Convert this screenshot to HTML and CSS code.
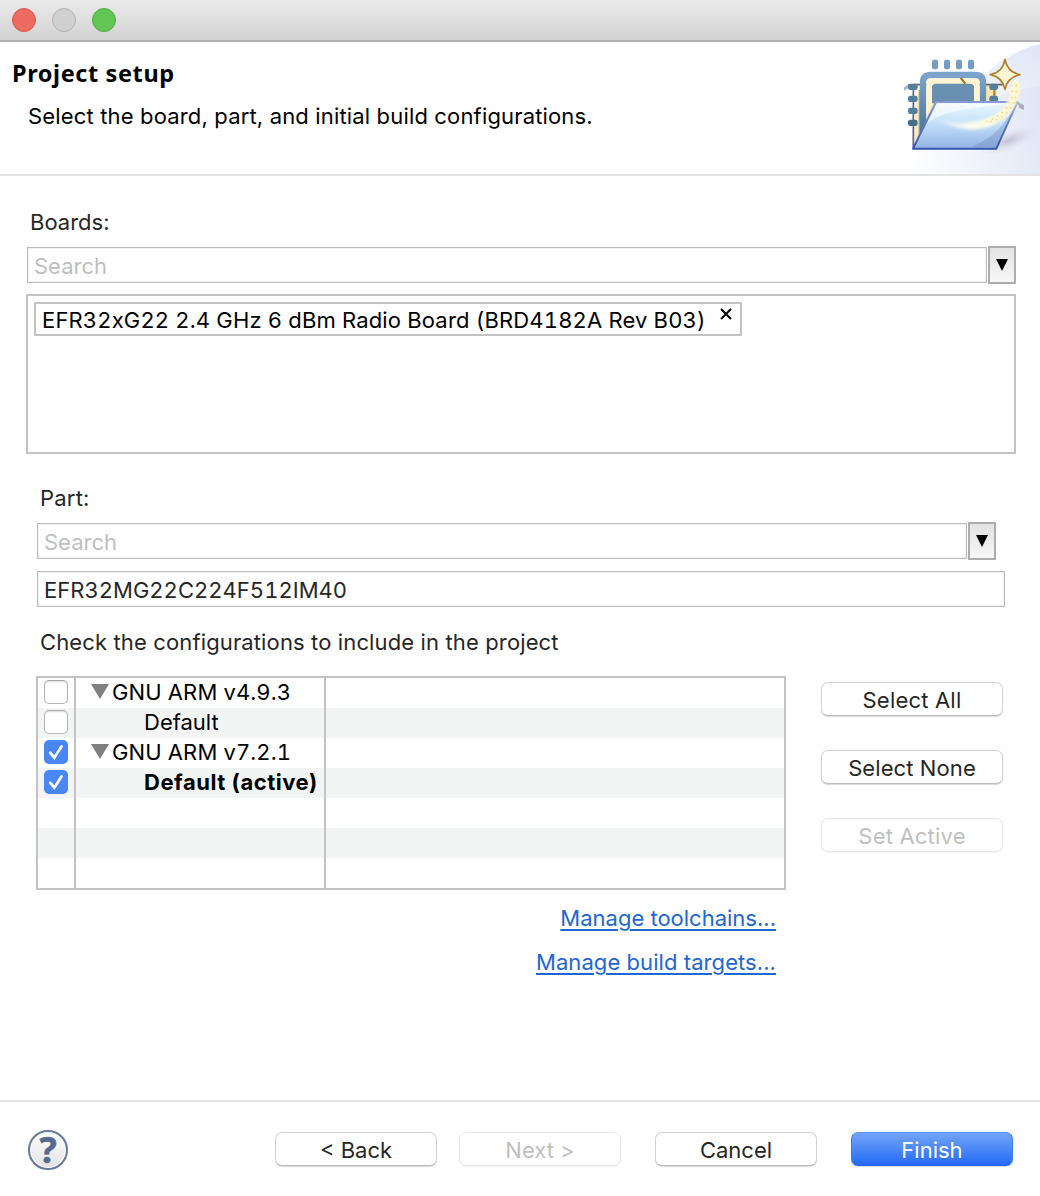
FILE: index.html
```html
<!DOCTYPE html>
<html lang="en">
<head>
<meta charset="utf-8">
<title>Project setup</title>
<link rel="stylesheet" href="styles.css">
</head>
<body>
<div class="window">
  <div class="titlebar">
    <span class="light light-close"></span>
    <span class="light light-min"></span>
    <span class="light light-zoom"></span>
  </div>

  <header class="banner">
    <div class="banner-text">
      <h1>Project setup</h1>
      <p><span class="t-sub">Select the board, part, and initial build configurations.</span></p>
    </div>
    <svg class="banner-art" width="150" height="132" viewBox="0 6 450 396" aria-hidden="true">
      <defs>
        <linearGradient id="swoosh" x1="0" y1="1" x2="1" y2="0"><stop offset="0" stop-color="#ffffff"/><stop offset=".5" stop-color="#f5f7fc"/><stop offset="1" stop-color="#dfe6f5"/></linearGradient>
        <linearGradient id="ground" x1="0" y1="0" x2="1" y2="0"><stop offset="0" stop-color="#fff"/><stop offset="1" stop-color="#dce3f4"/></linearGradient>
        <linearGradient id="steel" x1="0" y1="0" x2="0" y2="1"><stop offset="0" stop-color="#7ba3cb"/><stop offset="1" stop-color="#4a7595"/></linearGradient>
        <linearGradient id="folder" x1="0" y1="0" x2="0" y2="1"><stop offset="0" stop-color="#ecf8ff"/><stop offset=".45" stop-color="#c5e1f9"/><stop offset="1" stop-color="#93b3e8"/></linearGradient>
        <linearGradient id="edge" x1="0" y1="0" x2="0" y2="1"><stop offset="0" stop-color="#8a9ad2"/><stop offset="1" stop-color="#3353b4"/></linearGradient>
        <linearGradient id="cream" x1="0" y1="0" x2="1" y2="1"><stop offset="0" stop-color="#fffbe6"/><stop offset="1" stop-color="#eed28a"/></linearGradient>
        <linearGradient id="trail" x1="0" y1="0" x2="1" y2="0"><stop offset="0" stop-color="#fff" stop-opacity=".3"/><stop offset=".4" stop-color="#fdfdec"/><stop offset="1" stop-color="#fff6cf"/></linearGradient>
        <radialGradient id="shade"><stop offset="0" stop-color="#b9b0c6" stop-opacity=".75"/><stop offset="1" stop-color="#d9d6e6" stop-opacity="0"/></radialGradient>
        <filter id="glow" x="-20%" y="-20%" width="140%" height="140%"><feGaussianBlur stdDeviation="4"/></filter>
      </defs>
      <path d="M40 402C110 300 190 170 300 90C350 50 400 22 450 12V402Z" fill="url(#swoosh)"/>
      <path d="M40 402C160 360 170 170 450 138V402Z" fill="url(#ground)" opacity=".7"/>
      <ellipse cx="355" cy="302" rx="95" ry="30" fill="url(#shade)" transform="rotate(-20 355 302)"/>
      <path d="M42 152V142L56 132H74V140L60 142Z" fill="#999da3" opacity=".75"/>
      <path d="M380 184L402 196V210L388 204Z" fill="#a4a7ae" opacity=".85"/>
      <path d="M68 134H320V200H130L72 318H68Z" fill="url(#cream)"/>
      <path d="M68 134H340" stroke="#765e59" stroke-width="5"/>
      <path d="M70 138V322" stroke="#5363af" stroke-width="5"/>
      <path d="M88 150V290" stroke="#c5973b" stroke-width="4"/>
      <path d="M99 290V128Q99 105 122 105H256Q279 105 279 128V190" fill="none" stroke="url(#steel)" stroke-width="19"/>
      <path d="M109 225V130Q109 115 122 115H254Q269 115 269 130V190H126Z" fill="#fff5d2"/>
      <path d="M126 190V142Q126 131 137 131H240Q252 131 252 142V190Z" fill="#6990b0"/>
      <path d="M212 114L226 131" stroke="#9b7430" stroke-width="6"/>
      <path d="M313 146V170" stroke="#b58230" stroke-width="7"/>
      <g fill="#759cc5">
        <rect x="126" y="59" width="18" height="29" rx="6"/><rect x="162" y="59" width="18" height="29" rx="6"/><rect x="198" y="59" width="18" height="29" rx="6"/><rect x="234" y="59" width="18" height="29" rx="6"/>
      </g>
      <g fill="#537f9f">
        <rect x="54" y="131" width="29" height="19" rx="7"/><rect x="54" y="167" width="29" height="19" rx="7"/><rect x="54" y="203" width="29" height="19" rx="7"/><rect x="54" y="239" width="29" height="19" rx="7" fill="#426f8c"/>
        <rect x="298" y="131" width="26" height="19" rx="7"/><rect x="298" y="167" width="26" height="19" rx="7"/>
      </g>
      <path d="M138 186H382L319 326H69Z" fill="url(#folder)" stroke="url(#edge)" stroke-width="6" stroke-linejoin="round"/>
      <path d="M142 192H345C260 204 160 208 112 250Z" fill="#fff" opacity=".55"/>
      <path d="M375 192L317 322H240C310 296 350 250 375 192Z" fill="#6685b5" opacity=".35"/>
      <path d="M146 240C200 254 262 250 305 229C345 209 366 176 362 122H388C398 186 358 236 305 257C250 278 190 268 146 240Z" fill="url(#trail)" filter="url(#glow)"/>
      <path d="M364 134C378 180 348 226 280 248M378 134C386 190 352 232 300 246" fill="none" stroke="#f5d98a" stroke-width="5" stroke-dasharray="5 13"/>
      <path d="M345 58Q352 97 390 104Q352 112 345 148Q338 112 301 104Q338 97 345 58Z" fill="#fff4d4" stroke="#ad802f" stroke-width="5" stroke-linejoin="round"/>
    </svg>
  </header>

  <main class="content">
    <section class="boards">
      <div class="label"><span class="t-boards">Boards:</span></div>
      <div class="combo">
        <div class="field placeholder"><span class="t-search">Search</span></div>
        <div class="drop"><svg width="12" height="12" viewBox="0 0 12 12"><path d="M0 0H12L6 12Z"/></svg></div>
      </div>
      <div class="board-list">
        <div class="chip"><span class="t-chip">EFR32xG22 2.4 GHz 6 dBm Radio Board (BRD4182A Rev B03)</span>
          <svg width="12" height="12" viewBox="0 0 12 12"><path d="M1 1L11 11M11 1L1 11" stroke="#000" stroke-width="2"/></svg>
        </div>
      </div>
    </section>

    <section class="part">
      <div class="label"><span class="t-part">Part:</span></div>
      <div class="combo">
        <div class="field placeholder"><span class="t-search">Search</span></div>
        <div class="drop"><svg width="12" height="12" viewBox="0 0 12 12"><path d="M0 0H12L6 12Z"/></svg></div>
      </div>
      <div class="field part-value"><span class="t-value">EFR32MG22C224F512IM40</span></div>
      <div class="label config-label"><span class="t-check">Check the configurations to include in the project</span></div>
    </section>

    <section class="configs">
      <div class="table">
        <div class="row"><div class="cell"><i class="box"></i></div><div class="cell tree"><i class="arrow"></i><span class="t-gnu">GNU ARM v4.9.3</span></div><div class="cell"></div></div>
        <div class="row"><div class="cell"><i class="box"></i></div><div class="cell leaf"><span class="t-default">Default</span></div><div class="cell"></div></div>
        <div class="row"><div class="cell"><i class="box checked"><svg width="24" height="24" viewBox="0 0 24 24"><path d="M6.3 12.8L10.3 17.7L17.5 6.5"/></svg></i></div><div class="cell tree"><i class="arrow"></i><span class="t-gnu">GNU ARM v7.2.1</span></div><div class="cell"></div></div>
        <div class="row"><div class="cell"><i class="box checked"><svg width="24" height="24" viewBox="0 0 24 24"><path d="M6.3 12.8L10.3 17.7L17.5 6.5"/></svg></i></div><div class="cell leaf"><b class="t-active">Default (active)</b></div><div class="cell"></div></div>
        <div class="row"><div class="cell"></div><div class="cell"></div><div class="cell"></div></div>
        <div class="row"><div class="cell"></div><div class="cell"></div><div class="cell"></div></div>
        <div class="row"><div class="cell"></div><div class="cell"></div><div class="cell"></div></div>
      </div>
      <div class="side">
        <div class="button"><span class="t-all">Select All</span></div>
        <div class="button"><span class="t-none">Select None</span></div>
        <div class="button disabled"><span class="t-all">Set Active</span></div>
      </div>
    </section>

    <nav class="links">
      <a>Manage toolchains...</a>
      <a class="t-build">Manage build targets...</a>
    </nav>
  </main>

  <footer class="footer">
    <div class="help">?</div>
    <div class="button back"><span>&lt; Back</span></div>
    <div class="button next disabled"><span>Next &gt;</span></div>
    <div class="button cancel"><span>Cancel</span></div>
    <div class="button primary"><span>Finish</span></div>
  </footer>
</div>
</body>
</html>
```
FILE: styles.css
```css
* { box-sizing: border-box; }
body { margin: 0; background: #fff; color: #000; font: 400 22px/30px Inter, "Liberation Sans", sans-serif; }
.window { width: 1040px; height: 1196px; display: flex; flex-direction: column; overflow: hidden; white-space: nowrap; }

.titlebar { height: 42px; display: flex; gap: 16px; padding: 8px 12px; background: linear-gradient(#ebebeb, #d2d2d2); border-bottom: 2px solid #b1b1b1; }
.light { width: 24px; height: 24px; border-radius: 50%; border: 1px solid; }
.light-close { background: #ed6b60; border-color: #d9554b; }
.light-min { background: #d0d0d0; border-color: #b0b0b0; }
.light-zoom { background: #62c655; border-color: #4dab41; }

.banner { height: 134px; display: flex; justify-content: space-between; border-bottom: 2px solid #e3e3e3; }
.banner-text { padding: 16px 0 0 12px; }
h1 { margin: 0; font: 700 23.5px/30px "Noto Sans", sans-serif; letter-spacing: .6px; }
.banner p { margin: 13px 0 0 16px; }

.content { flex: 1; }
.boards { padding: 31px 24px 0 26px; }
.label { height: 30px; padding-left: 4px; color: #262626; }
.combo { display: flex; height: 38px; margin-top: 9px; align-items: center; gap: 1px; padding-left: 1px; }
.field { flex: 1; height: 36px; padding: 3px 0 0 6px; border: 1px solid #bdbdbd; box-shadow: inset 0 0 0 1px #f1f1f1; }
.placeholder { color: #bfbfbf; }
.drop { width: 28px; height: 38px; display: flex; justify-content: center; align-items: center; border: 2px solid #adadad; background: linear-gradient(#e3e3e3, #f7f7f7); }
.board-list { height: 160px; margin-top: 10px; padding: 6px; border: 2px solid #c3c3c3; }
.chip { width: 708px; height: 34px; display: flex; justify-content: space-between; padding: 2px 8px 0 6px; border: 2px solid #c3c3c3; line-height: 28px; }
.chip svg { margin-top: 2px; }

.part { padding: 29px 44px 0 36px; }
.part-value { width: 968px; margin: 11px 0 0 1px; color: #262626; }
.config-label { margin-top: 20px; }

.configs { display: flex; padding: 19px 0 0 36px; gap: 35px; }
.table { width: 750px; height: 214px; border: 2px solid #c3c3c3; }
.row { height: 30px; display: grid; grid-template: 30px / 38px 250px 1fr; line-height: 28px; }
.row:nth-child(even) { background: #f3f5f5; }
.cell { display: flex; align-items: center; padding-bottom: 2px; border-right: 2px solid #c3c3c3; }
.cell:last-child { border-right: 0; }
.box { width: 24px; height: 24px; margin-left: 6px; border: 1px solid #b8b8b8; border-top-color: #a5a5a5; border-radius: 5px; background: #fff; box-shadow: inset 0 1px 2px #ddd; }
.box.checked { border: 0; background: #4a87f5; box-shadow: none; }
.box svg { display: block; fill: none; stroke: #fff; stroke-width: 2.7; stroke-linecap: round; }
.tree { padding-left: 15px; }
.arrow { margin: -2px 3px 0 0; border: 9px solid transparent; border-top: 15px solid #808080; border-bottom: 0; }
.leaf { padding-left: 68px; }

.side { width: 182px; display: flex; flex-direction: column; gap: 34px; padding-top: 6px; }
.button { height: 34px; display: flex; justify-content: center; padding-top: 2px; border: 1px solid #d3d3d3; border-bottom-color: #bdbdbd; border-radius: 7px; background: #fff; color: #262626; box-shadow: 0 1px 1px rgba(0, 0, 0, .15); }
.button.disabled { color: #bfbfbf; border-color: #e6e6e6; box-shadow: 0 1px 1px rgba(0, 0, 0, .05); }
.button.primary { color: #fff; border-color: #5b93f5 #3b7cf5 #2467ef; background: linear-gradient(#72a4f7, #246bf6); }

.links { width: 776px; display: flex; flex-direction: column; align-items: flex-end; gap: 14px; padding-top: 13px; }
.links a { color: #2067d3; text-decoration: underline; text-decoration-thickness: 2px; text-underline-offset: 3px; }

.footer { height: 96px; display: flex; align-items: flex-start; padding: 30px 27px 0 28px; border-top: 2px solid #e6e6e6; }
.footer .button { width: 162px; }
.help { width: 40px; height: 40px; margin: -2px 207px 0 0; border: 2px solid #64799b; border-radius: 50%; background: linear-gradient(#fff, #e2e2e2); box-shadow: inset 0 0 0 1px #fff; color: #566a90; font: 700 36px/35px "Noto Sans", sans-serif; text-align: center; -webkit-text-stroke: .6px #566a90; }
.next { margin-left: 22px; }
.cancel { margin-left: 34px; }
.primary { margin-left: 34px; }

/* Per-string tracking; part numbers and versions use fixed-width digits. */
.t-chip, .t-value, .t-gnu { font-variant-numeric: tabular-nums; }
.t-sub { letter-spacing: .16px; }
.t-chip { letter-spacing: .16px; }
.t-value { letter-spacing: .02px; }
.t-part { letter-spacing: .2px; }
.t-check { letter-spacing: .13px; }
.t-gnu { letter-spacing: .13px; }
.t-active { letter-spacing: .53px; }
.t-all { letter-spacing: .2px; }
.t-none { letter-spacing: .1px; }
.t-build { letter-spacing: .07px; }
```
